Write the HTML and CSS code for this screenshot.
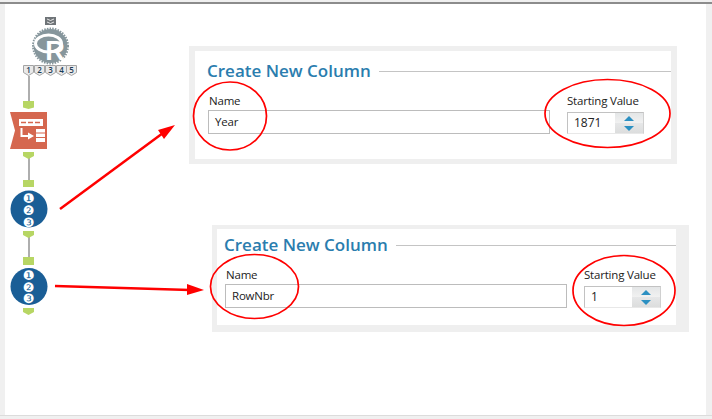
FILE: index.html
```html
<!DOCTYPE html>
<html lang="en">
<head>
    <meta charset="UTF-8">
    <meta name="viewport" content="width=device-width, initial-scale=1.0">
    <title>Create New Column</title>
    <link rel="stylesheet" href="styles.css">
</head>
<body>
    <div class="canvas">
        <!-- workflow nodes -->
        <svg class="workflow" width="100" height="330" viewBox="0 0 100 330">
            <line class="wire" x1="29" y1="76" x2="29" y2="102"/>
            <line class="wire" x1="29" y1="158" x2="29" y2="181"/>
            <line class="wire" x1="29" y1="237" x2="29" y2="258"/>

            <!-- R tool -->
            <rect x="45" y="17" width="11" height="8" fill="#6f7478"/>
            <path d="M47 19l3.500 1.500l3.500-1.500M47 22l3.500 1.500l3.500-1.500" fill="none" stroke="#e8e8e8"/>
            <circle cx="50.500" cy="46" r="17" fill="#86969c"/>
            <circle cx="50.500" cy="46" r="17.500" fill="none" stroke="#86969c" stroke-width="2" stroke-dasharray="1.500 1.200"/>
            <ellipse cx="48.500" cy="43.500" rx="13" ry="8.500" fill="none" stroke="#fff" stroke-width="3"/>
            <path d="M52 50.500h12v5h-12z" fill="#86969c"/>
            <text class="r-letter" x="55" y="60">R</text>

            <!-- numbered outputs -->
            <g class="tag">
                <path d="M23.500 65.500h10v7l-5 3l-5-3z"/>
                <path d="M34.500 65.500h10v7l-5 3l-5-3z"/>
                <path d="M45.500 65.500h10v7l-5 3l-5-3z"/>
                <path d="M56.500 65.500h10v7l-5 3l-5-3z"/>
                <path d="M66.500 65.500h10v7l-5 3l-5-3z"/>
            </g>
            <g class="tag-text">
                <text x="28.500" y="73">1</text>
                <text x="39.500" y="73">2</text>
                <text x="50.500" y="73">3</text>
                <text x="61.500" y="73">4</text>
                <text x="71.500" y="73">5</text>
            </g>

            <!-- connectors -->
            <path class="anchor" d="M23 101h11v6.500l-5.500 1.500l-5.500-1.500z"/>
            <path class="anchor" d="M23 152h11v4l-5.500 3l-5.500-3z"/>
            <path class="anchor" d="M23 180h11v7h-11z"/>
            <path class="anchor" d="M23 231h11v4l-5.500 3l-5.500-3z"/>
            <path class="anchor" d="M23 257h11v8h-11z"/>
            <path class="anchor" d="M23 308h11v4l-5.500 3l-5.500-3z"/>

            <!-- append fields tool -->
            <path d="M10 112h37v37h-37l5-18.500z" fill="#d5674f"/>
            <rect x="19" y="119" width="24" height="7" fill="#fff"/>
            <path d="M21 122.500h5M28 122.500h5M35 122.500h5" stroke="#d5674f" stroke-width="1.500"/>
            <path d="M21.500 128v8h8" fill="none" stroke="#fff" stroke-width="2"/>
            <path d="M28 132.500l6 3.500l-6 3.500z" fill="#fff"/>
            <rect x="36" y="129" width="9" height="13" fill="#fff"/>
            <path d="M36 133h9M36 137.500h9" stroke="#d5674f"/>

            <!-- record id tools -->
            <circle class="record" cx="29" cy="209" r="18.500"/>
            <text class="record-num" x="28.500" y="202.700">❶</text>
            <text class="record-num" x="28.500" y="214.700">❷</text>
            <text class="record-num" x="28.500" y="226.700">❸</text>
            <circle class="record" cx="29" cy="286.500" r="18.500"/>
            <text class="record-num" x="28.500" y="279.700">❶</text>
            <text class="record-num" x="28.500" y="291.700">❷</text>
            <text class="record-num" x="28.500" y="302.700">❸</text>
        </svg>

        <section class="panel panel-year">
            <div class="panel-head">
                <h2>Create New Column</h2>
                <span class="rule"></span>
            </div>
            <div class="fields">
                <div class="field-name">
                    <label>Name</label>
                    <div class="text-box">Year</div>
                </div>
                <div class="field-start">
                    <label>Starting Value</label>
                    <div class="spinner">
                        <span class="spin-value">1871</span>
                        <span class="spin-btns"><span class="spin-btn"><i class="up"></i></span><span class="spin-btn"><i class="down"></i></span></span>
                    </div>
                </div>
            </div>
        </section>

        <section class="panel panel-row">
            <div class="panel-head">
                <h2>Create New Column</h2>
                <span class="rule"></span>
            </div>
            <div class="fields">
                <div class="field-name">
                    <label>Name</label>
                    <div class="text-box">RowNbr</div>
                </div>
                <div class="field-start">
                    <label>Starting Value</label>
                    <div class="spinner">
                        <span class="spin-value">1</span>
                        <span class="spin-btns"><span class="spin-btn"><i class="up"></i></span><span class="spin-btn"><i class="down"></i></span></span>
                    </div>
                </div>
            </div>
        </section>

        <!-- red hand-drawn notes on top -->
        <svg class="notes" width="712" height="419" viewBox="0 0 712 419">
            <ellipse cx="230" cy="116" rx="36.500" ry="34"/>
            <ellipse cx="607.500" cy="113.500" rx="62.500" ry="34"/>
            <ellipse cx="254.500" cy="286.500" rx="44" ry="32"/>
            <ellipse cx="624" cy="290.500" rx="51" ry="35"/>
            <line x1="60" y1="209" x2="163" y2="133"/>
            <path class="head" d="M175 125l-17 5l6 9z"/>
            <line x1="55" y1="286" x2="190" y2="290"/>
            <path class="head" d="M204 290l-17-6v11z"/>
        </svg>
    </div>
</body>
</html>
```

FILE: styles.css
```css
html, body {
    margin: 0;
    padding: 0;
}
body {
    width: 712px;
    height: 419px;
    overflow: hidden;
    background-color: #f0f0f0;
    font-family: "Open Sans", sans-serif;
    color: #222;
}
.canvas {
    position: relative;
    box-sizing: border-box;
    width: 701px;
    height: 413px;
    margin: 2px 0 0 5px;
    background-color: #fff;
}
.canvas::before {
    content: "";
    position: absolute;
    top: 0;
    left: -5px;
    width: 712px;
    height: 2px;
    background-color: #8c8c8c;
}
.canvas::after {
    content: "";
    position: absolute;
    bottom: -1px;
    left: -5px;
    width: 712px;
    height: 1px;
    background-color: #dcdcdc;
}

.workflow {
    position: absolute;
    top: -2px;
    left: -5px;
}
.wire {
    stroke: #aeaeae;
    stroke-width: 2;
}
.anchor {
    fill: #b7d664;
}
.tag path {
    fill: #e9e9e9;
    stroke: #a4a4a4;
}
.tag-text text {
    font-family: "Open Sans", sans-serif;
    font-size: 8px;
    font-weight: 600;
    text-anchor: middle;
    fill: #1c3c55;
}
.r-letter {
    font-family: "Liberation Sans", sans-serif;
    font-size: 27px;
    font-weight: bold;
    text-anchor: middle;
    fill: #fff;
}
.record {
    fill: #1a5e96;
}
.record-num {
    font-family: "DejaVu Sans", sans-serif;
    font-size: 13px;
    text-anchor: middle;
    fill: #fff;
}

.panel {
    position: absolute;
    box-sizing: border-box;
    background-color: #fff;
    border: 0 solid #efefef;
}
.panel-year {
    top: 44px;
    left: 184px;
    width: 488px;
    height: 118px;
    border-width: 5px 6px 5px 6px;
    padding: 8px 0 0 12px;
}
.panel-row {
    top: 223px;
    left: 207px;
    width: 477px;
    height: 107px;
    border-width: 4px 13px 7px 5px;
    padding: 4px 0 0 7px;
}
.panel-head {
    display: flex;
    align-items: center;
    gap: 8px;
}
.panel-head h2 {
    margin: 0;
    font-size: 17px;
    font-weight: 600;
    line-height: 24px;
    color: #2a7dae;
}
.rule {
    flex: 1;
    height: 1px;
    background-color: #c4c4c4;
}
.fields {
    display: flex;
    align-items: flex-end;
    gap: 17px;
    margin: 10px 0 0 1px;
}
.field-name {
    width: 342px;
}
.field-name label {
    padding-left: 1px;
}
label {
    display: block;
    font-size: 11.500px;
    letter-spacing: -0.200px;
    line-height: 16px;
    margin-bottom: 1px;
}
.text-box {
    box-sizing: border-box;
    height: 24px;
    padding-left: 6px;
    border: 1px solid #bcbcbc;
    font-size: 11.500px;
    letter-spacing: -0.200px;
    line-height: 22px;
}
.field-start {
    width: 77px;
}
.field-start label {
    white-space: nowrap;
    margin-bottom: 3px;
}
.spinner {
    display: flex;
    box-sizing: border-box;
    height: 22px;
    border: 1px solid #c2c2c2;
    border-bottom-color: #e8e8e8;
    border-right-color: #d0d0d0;
}
.spin-value {
    flex: 1;
    padding-left: 6px;
    font-size: 12px;
    line-height: 20px;
}
.spin-btns {
    display: flex;
    flex-direction: column;
    width: 28px;
}
.spin-btn {
    flex: 1;
    display: flex;
    align-items: center;
    justify-content: center;
}
.spin-btn:first-child {
    background: linear-gradient(#e4e6e7, #f1f1f1);
}
.spin-btn:last-child {
    background: linear-gradient(#e6e7e8, #dcdddd);
}
.up, .down {
    width: 0;
    height: 0;
    border-left: 5px solid transparent;
    border-right: 5px solid transparent;
}
.up {
    border-bottom: 5px solid #2c90c2;
}
.down {
    border-top: 5px solid #2c90c2;
}

.notes {
    position: absolute;
    top: -2px;
    left: -5px;
    pointer-events: none;
}
.notes ellipse, .notes line {
    fill: none;
    stroke: #f00;
}
.notes ellipse {
    stroke-width: 1.700;
}
.notes line {
    stroke-width: 2.500;
}
.notes .head {
    fill: #f00;
}
```
